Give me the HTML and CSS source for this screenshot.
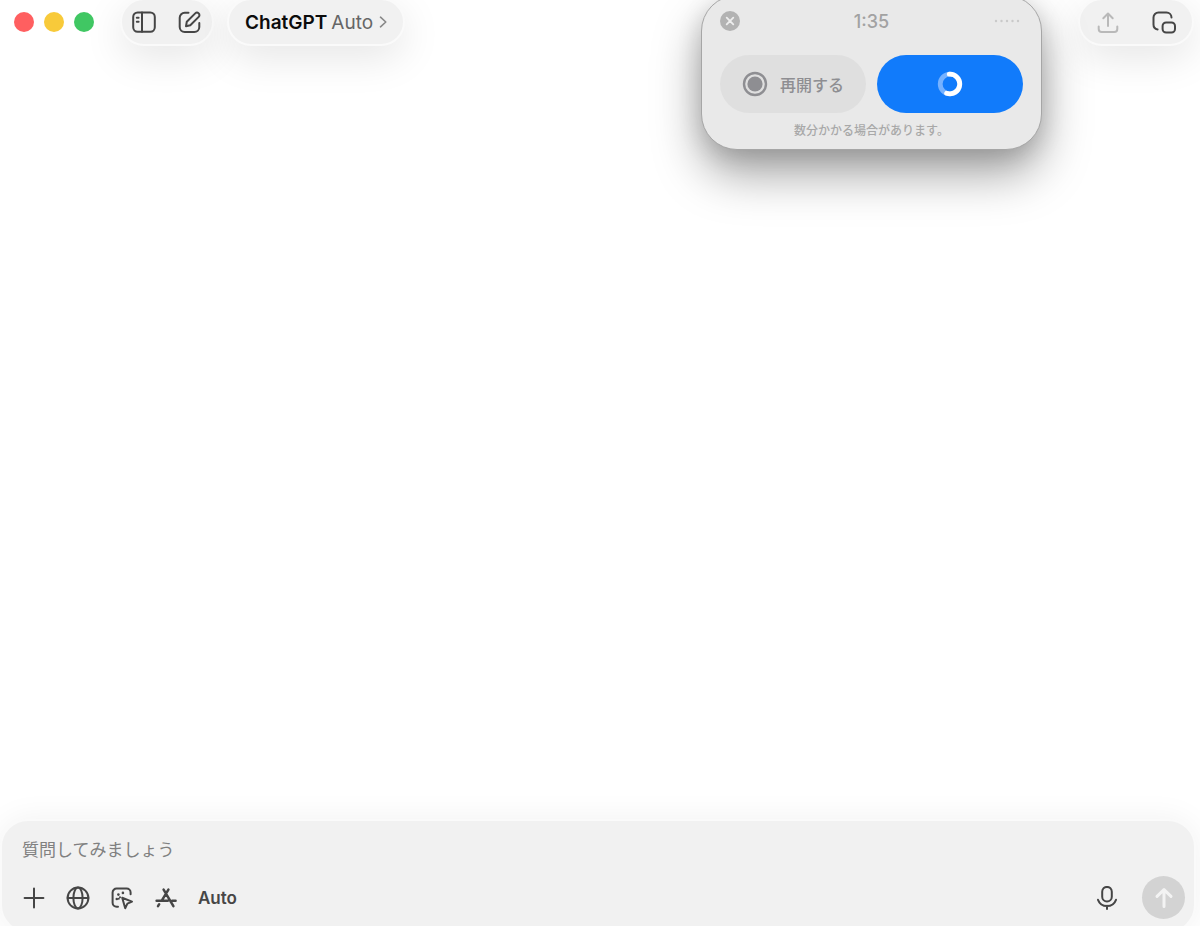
FILE: index.html
```
<!DOCTYPE html>
<html lang="ja">
<head>
    <meta charset="UTF-8">
    <meta name="viewport" content="width=device-width, initial-scale=1.0">
    <title>ChatGPT</title>
    <link rel="stylesheet" href="styles.css">
</head>
<body>

<header class="toolbar">
    <div class="lights">
        <button type="button" class="light red" aria-label="閉じる"></button>
        <button type="button" class="light yellow" aria-label="しまう"></button>
        <button type="button" class="light green" aria-label="拡大"></button>
    </div>

    <div class="pill tools">
        <button type="button" aria-label="サイドバー">
            <svg class="icon" viewBox="0 0 24 24">
                <rect x="1.2" y="2.4" width="21.6" height="19.4" rx="4.5"/>
                <path d="M10 2.4V21.8M4.8 7.8h1.8M4.8 11.8h1.8"/>
            </svg>
        </button>
        <button type="button" aria-label="新しいチャット">
            <svg class="icon" viewBox="0 0 24 24">
                <path d="M10.5 2.8H6.7A5 5 0 0 0 1.7 7.8V17a5 5 0 0 0 5 5h9.6a5 5 0 0 0 5-5v-4"/>
                <path d="M8 16.2l.8-4.4 8.4-8.4a2.4 2.4 0 0 1 3.5 3.5l-8.4 8.4z"/>
            </svg>
        </button>
    </div>

    <button type="button" class="pill model">
        <strong>ChatGPT</strong>
        <span>Auto</span>
        <svg class="chevron" viewBox="0 0 8 12"><path d="M1.5 1.2l5.3 4.8-5.3 4.8"/></svg>
    </button>

    <div class="pill share">
        <button type="button" aria-label="共有" disabled>
            <svg class="icon" viewBox="0 0 24 24">
                <path d="M12 16V3.8M7.3 8.2L12 3.5l4.7 4.7M2.7 16.5V19a3 3 0 0 0 3 3h12.6a3 3 0 0 0 3-3v-2.5"/>
            </svg>
        </button>
        <button type="button" aria-label="コンパニオンウインドウ">
            <svg class="icon" viewBox="0 0 24 24">
                <path d="M5.6 19.4A4.8 4.8 0 0 1 1.5 14.6V7.6a5 5 0 0 1 5-5h8a5 5 0 0 1 5 4.9"/>
                <rect x="10.6" y="12.4" width="12.4" height="10.2" rx="3.5"/>
            </svg>
        </button>
    </div>

    <!-- 録音パネル -->
    <section class="recorder" aria-label="録音">
        <div class="recorder-head">
            <button type="button" class="close" aria-label="閉じる">
                <svg viewBox="0 0 20 20"><path d="M6.7 6.7l6.6 6.6M13.3 6.7l-6.6 6.6"/></svg>
            </button>
            <time>1:35</time>
            <svg class="level" viewBox="0 0 26 4">
                <circle cx="2" cy="2" r="1.2"/>
                <circle cx="7.5" cy="2" r="1.2"/>
                <circle cx="13" cy="2" r="1.2"/>
                <circle cx="18.5" cy="2" r="1.2"/>
                <circle cx="24" cy="2" r="1.2"/>
            </svg>
        </div>
        <div class="recorder-actions">
            <button type="button" class="resume" disabled>
                <svg viewBox="0 0 26 26">
                    <circle class="ring" cx="13" cy="13" r="11"/>
                    <circle class="dot" cx="13" cy="13" r="7.6"/>
                </svg>
                再開する
            </button>
            <button type="button" class="send-recording" aria-label="送信中">
                <svg viewBox="0 0 26 26">
                    <circle class="track" cx="13" cy="13" r="9.8"/>
                    <path class="arc" d="M12.2 3.2A9.8 9.8 0 1 1 9.6 22.2"/>
                </svg>
            </button>
        </div>
        <p class="note">数分かかる場合があります。</p>
    </section>
</header>

<main class="conversation"></main>

<form class="composer">
    <input type="text" class="prompt" placeholder="質問してみましょう" aria-label="質問">
    <div class="composer-bar">
        <button type="button" aria-label="追加">
            <svg class="icon" viewBox="0 0 24 24"><path d="M12 2.6v18.8M2.6 12h18.8"/></svg>
        </button>
        <button type="button" aria-label="検索">
            <svg class="icon" viewBox="0 0 24 24">
                <circle cx="12" cy="12" r="10.4"/>
                <ellipse cx="12" cy="12" rx="4.6" ry="10.4"/>
                <path d="M1.6 12h20.8"/>
            </svg>
        </button>
        <button type="button" aria-label="エージェント">
            <svg class="icon" viewBox="0 0 24 24">
                <path d="M8 20.8H6.6a4 4 0 0 1-4-4V6.6a4 4 0 0 1 4-4H16.6a4 4 0 0 1 4 4v1.7"/>
                <path d="M12.2 11.8l9.8 3.8-4.6 2-2.2 4.6z"/>
                <g class="fill">
                    <circle cx="12.9" cy="6.9" r="1.3"/>
                    <circle cx="8.4" cy="8.6" r="1.3"/>
                    <circle cx="6.8" cy="13" r="1.3"/>
                    <circle cx="10" cy="11.2" r="1"/>
                    <circle cx="8.8" cy="12.8" r="1"/>
                </g>
            </svg>
        </button>
        <button type="button" aria-label="アプリ">
            <svg class="icon bold" viewBox="0 0 24 24">
                <path d="M9.6 3.6l9.8 16.6M14.4 3.6L7.6 14.8M5.2 18.2L4 20.2M2.6 14.8h11.2M18.2 14.8h3.4"/>
            </svg>
        </button>
        <button type="button" class="mode">Auto</button>
        <button type="button" class="mic" aria-label="音声入力">
            <svg class="icon" viewBox="0 0 24 24">
                <rect x="7.2" y="0.9" width="9.6" height="14.6" rx="4.8"/>
                <path d="M3 13.8a9.6 9.6 0 0 0 18 0M12 19.8v3.2"/>
            </svg>
        </button>
        <button type="submit" class="submit" aria-label="送信" disabled>
            <svg viewBox="0 0 24 24"><path d="M12 20.5V4M5 10.4L12 3.6l7 6.8"/></svg>
        </button>
    </div>
</form>

</body>
</html>
```

FILE: styles.css
```
* {
    box-sizing: border-box;
}
html, body {
    height: 100%;
}
body {
    margin: 0;
    display: flex;
    flex-direction: column;
    overflow: hidden;
    background: #fff;
    font-family: Inter, "Noto Sans CJK JP", sans-serif;
    color: #464646;
}
button {
    display: flex;
    align-items: center;
    justify-content: center;
    padding: 0;
    border: none;
    background: none;
    color: inherit;
    font: inherit;
    cursor: pointer;
}
svg {
    display: block;
    flex: none;
    fill: none;
    stroke: currentColor;
    stroke-linecap: round;
    stroke-linejoin: round;
}
.icon {
    width: 24px;
    height: 24px;
    stroke-width: 2;
}
.icon.bold {
    stroke-width: 2.5;
}
.icon .fill {
    fill: currentColor;
    stroke: none;
}

/* Toolbar */
.toolbar {
    position: relative;
    display: flex;
    align-items: center;
    height: 48px;
    margin-top: -2px;
    padding: 0 6px 0 14px;
}
.lights {
    display: flex;
    gap: 10px;
    margin-right: 26px;
}
.light {
    width: 20px;
    height: 20px;
    border-radius: 50%;
}
.red {
    background: #ff5f60;
}
.yellow {
    background: #f8ca3a;
}
.green {
    background: #40c763;
}
.pill {
    display: flex;
    align-items: center;
    height: 48px;
    border: 2px solid #fafafa;
    border-radius: 24px;
    background: #f1f1f1;
    box-shadow: 0 12px 40px rgba(0, 0, 0, 0.1);
}
.tools {
    gap: 22px;
    margin-right: 13px;
    padding: 0 10px;
}
.model {
    gap: 4px;
    padding: 0 16px;
    font-size: 19px;
    color: #666;
}
.model strong {
    font-weight: 600;
    color: #0c0c0c;
}
.chevron {
    width: 8px;
    height: 12px;
    margin-left: 2px;
    stroke-width: 1.6;
    color: #888;
}
.share {
    gap: 32px;
    margin-left: auto;
    padding: 0 16px;
}
.share button:disabled {
    color: #b9b9b9;
}

/* Recorder */
.recorder {
    position: absolute;
    top: -3px;
    right: 158px;
    width: 341px;
    padding: 14px 18px 9px;
    border: 1px solid #a6a6a6;
    border-radius: 36px;
    background: #e9e9e9;
    box-shadow: 0 24px 48px rgba(0, 0, 0, 0.36), 0 6px 24px rgba(0, 0, 0, 0.14);
}
.recorder-head {
    display: grid;
    grid-template-columns: 1fr auto 1fr;
    align-items: center;
    height: 22px;
    margin-bottom: 23px;
}
.close {
    width: 20px;
    height: 20px;
    border-radius: 50%;
    background: #b2b2b2;
    color: #ededed;
}
.close svg {
    width: 20px;
    height: 20px;
    stroke-width: 1.8;
}
.recorder time {
    font-size: 18px;
    font-weight: 500;
    color: #a2a2a2;
}
.level {
    width: 26px;
    height: 4px;
    margin-right: 3px;
    justify-self: end;
    fill: #c9c9c9;
    stroke: none;
}
.recorder-actions {
    display: grid;
    grid-template-columns: 1fr 1fr;
    gap: 11px;
}
.recorder-actions button {
    height: 58px;
    border-radius: 29px;
}
.recorder-actions svg {
    width: 26px;
    height: 26px;
}
.resume {
    gap: 12px;
    background: #dfdfdf;
    color: #8e8e92;
    font-size: 16px;
    font-weight: 500;
}
.resume .ring {
    stroke-width: 2.4;
}
.resume .dot {
    fill: currentColor;
    stroke: none;
}
.send-recording {
    background: #117bfb;
    color: #fff;
}
.send-recording svg {
    stroke-width: 4.8;
}
.send-recording .track {
    stroke: #76b2ff;
}
.note {
    margin: 9px 0 0;
    font-size: 12px;
    font-weight: 500;
    line-height: 18px;
    text-align: center;
    color: #a8a8a8;
}

.conversation {
    flex: 1;
}

/* Composer: the lower edge runs under the window edge */
.composer {
    margin: 0 4px -7px 0;
    padding: 17px 9px 12px 20px;
    border: 2px solid #fafafa;
    border-radius: 28px;
    background: #f1f1f1;
    box-shadow: 0 0 32px rgba(0, 0, 0, 0.06);
}
.prompt {
    display: block;
    width: 100%;
    height: 24px;
    padding: 0;
    border: none;
    outline: none;
    background: none;
    font: inherit;
    font-size: 17px;
}
.prompt::placeholder {
    color: #808080;
    opacity: 1;
}
.composer-bar {
    display: flex;
    align-items: center;
    gap: 20px;
    margin-top: 14px;
}
.mode {
    font-size: 17px;
    font-weight: 600;
}
.mic {
    margin-left: auto;
}
.submit {
    width: 43px;
    height: 43px;
    margin-left: 3px;
    border-radius: 50%;
    background: #d3d3d3;
    color: #f3f3f3;
}
.submit svg {
    width: 24px;
    height: 24px;
    stroke-width: 3;
}
```
